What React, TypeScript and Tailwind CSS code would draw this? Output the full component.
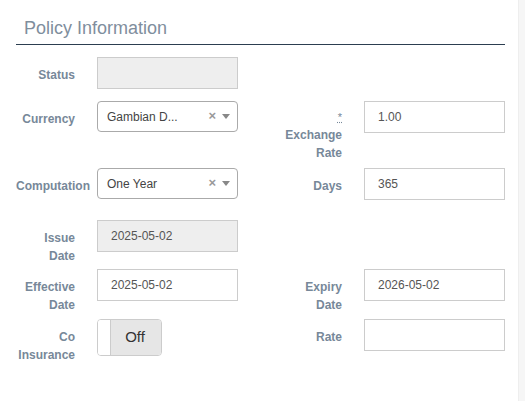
import React from "react";

const labelCls =
  "shrink-0 text-right text-[12px] font-bold leading-[18px] pt-[9px] text-[#778899]";

function TextInput({ value = "", disabled = false }: { value?: string; disabled?: boolean }) {
  return (
    <div
      className={`w-[141px] h-[32px] shrink-0 border border-[#cccccc] flex items-center pl-[13px] text-[12px] text-[#555555] ${
        disabled ? "bg-[#eeeeee]" : "bg-white"
      }`}
    >
      {value}
    </div>
  );
}

function Select({ value }: { value: string }) {
  return (
    <div className="w-[141px] h-[31px] shrink-0 border border-[#aaaaaa] rounded-[4px] bg-white flex items-center pl-[9px] pr-[6px] text-[12px] text-[#444444]">
      <span className="flex-1 truncate">{value}</span>
      <span className="text-[#999999] text-[13px] font-bold leading-none mr-[6px] mt-[-2px]">×</span>
      <svg width="8" height="5" viewBox="0 0 8 5" className="mr-[1px]">
        <path d="M0 0 L8 0 L4 5 Z" fill="#888888" />
      </svg>
    </div>
  );
}

function Toggle() {
  return (
    <div className="w-[65px] h-[37px] shrink-0 border border-[#cccccc] rounded-[4px] flex overflow-hidden">
      <div className="w-[13px] h-full bg-white border-r border-[#cccccc]" />
      <div className="flex-1 h-full bg-[#e6e6e6] flex items-center justify-center text-[15px] text-[#333333] pr-[2px]">
        Off
      </div>
    </div>
  );
}

export default function App() {
  return (
    <div
      className="w-[525px] h-[401px] bg-white flex"
      style={{ fontFamily: '"Liberation Sans", Arial, sans-serif' }}
    >
      <div className="flex-1 pl-[16px]">
        <div className="w-[489px] border-b border-[#2c3e50] pt-[17px] pb-[5px] pl-[8px] text-[18px] leading-[22px] text-[#7f8e9d]">
          Policy Information
        </div>

        <div className="mt-[12px] flex flex-col">
          {/* Status */}
          <div className="h-[44px] flex items-start">
            <div className={`${labelCls} w-[59px]`}>Status</div>
            <div className="ml-[22px]">
              <TextInput disabled />
            </div>
          </div>

          {/* Currency / Exchange Rate */}
          <div className="h-[67px] flex items-start">
            <div className={`${labelCls} w-[59px]`}>Currency</div>
            <div className="ml-[22px]">
              <Select value="Gambian D..." />
            </div>
            <div className={`${labelCls} w-[82px] ml-[22px] !pt-[8px]`}>
              <div className="leading-[17px]">
                <abbr className="underline decoration-dotted font-normal text-[11px]" title="required">
                  *
                </abbr>
              </div>
              <div>Exchange</div>
              <div>Rate</div>
            </div>
            <div className="ml-[22px]">
              <TextInput value="1.00" />
            </div>
          </div>

          {/* Computation / Days */}
          <div className="h-[52px] flex items-start">
            <div className={`${labelCls} w-[59px]`}>Computation</div>
            <div className="ml-[22px]">
              <Select value="One Year" />
            </div>
            <div className={`${labelCls} w-[82px] ml-[22px]`}>Days</div>
            <div className="ml-[22px]">
              <TextInput value="365" />
            </div>
          </div>

          {/* Issue Date */}
          <div className="h-[49px] flex items-start">
            <div className={`${labelCls} w-[59px]`}>
              <div>Issue</div>
              <div>Date</div>
            </div>
            <div className="ml-[22px]">
              <TextInput value="2025-05-02" disabled />
            </div>
          </div>

          {/* Effective / Expiry */}
          <div className="h-[50px] flex items-start">
            <div className={`${labelCls} w-[59px]`}>
              <div>Effective</div>
              <div>Date</div>
            </div>
            <div className="ml-[22px]">
              <TextInput value="2025-05-02" />
            </div>
            <div className={`${labelCls} w-[82px] ml-[22px]`}>
              <div>Expiry</div>
              <div>Date</div>
            </div>
            <div className="ml-[22px]">
              <TextInput value="2026-05-02" />
            </div>
          </div>

          {/* Co Insurance / Rate */}
          <div className="flex items-start">
            <div className={`${labelCls} w-[59px]`}>
              <div>Co</div>
              <div>Insurance</div>
            </div>
            <div className="ml-[22px] w-[141px] shrink-0">
              <Toggle />
            </div>
            <div className={`${labelCls} w-[82px] ml-[22px]`}>Rate</div>
            <div className="ml-[22px]">
              <TextInput />
            </div>
          </div>
        </div>
      </div>
      <div className="w-[7px] h-full bg-[#f6f6f6] border-l border-[#eeeeee]" />
    </div>
  );
}
